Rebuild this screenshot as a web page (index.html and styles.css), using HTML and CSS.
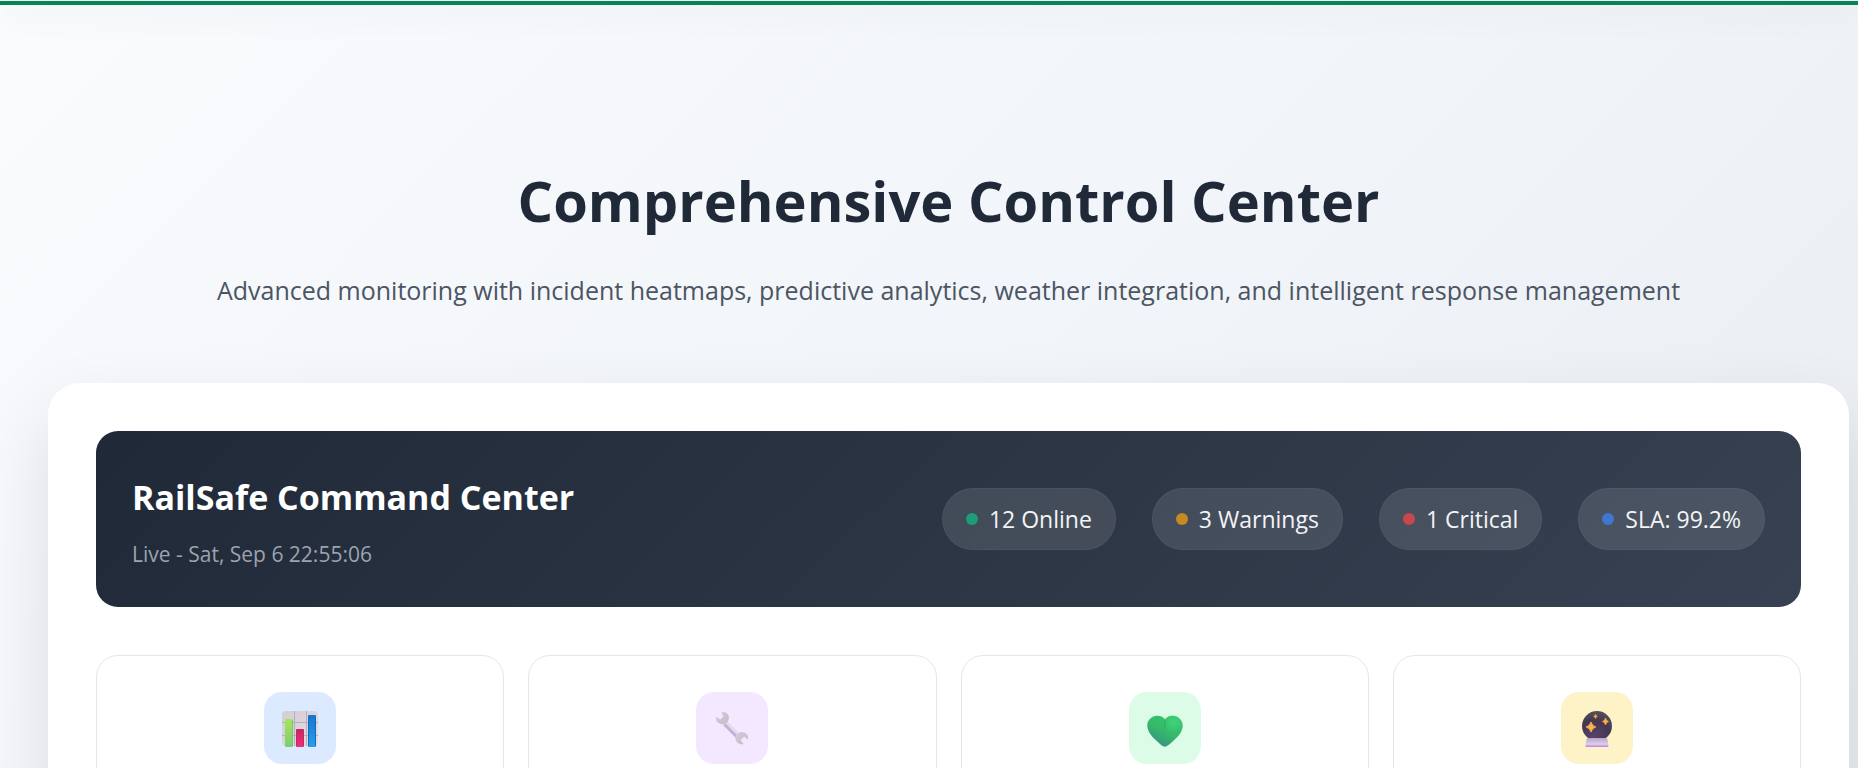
FILE: index.html
```
<!DOCTYPE html>
<html lang="en">
<head>
<meta charset="utf-8">
<meta name="viewport" content="width=device-width, initial-scale=1">
<title>RailSafe Control Center</title>
<link rel="stylesheet" href="styles.css">
</head>
<body>
<div class="page">
  <div class="topbar"></div>
  <main class="content">
    <header class="hero">
      <h1 class="hero-title">Comprehensive Control Center</h1>
      <p class="hero-text">Advanced monitoring with incident heatmaps, predictive analytics, weather integration, and intelligent response management</p>
    </header>
    <section class="panel">
      <div class="command">
        <div class="command-info">
          <h2 class="command-title">RailSafe Command Center</h2>
          <p class="command-time">Live - Sat, Sep 6 22:55:06</p>
        </div>
        <ul class="statuses">
          <li class="status"><span class="dot dot-green"></span><span>12 Online</span></li>
          <li class="status"><span class="dot dot-amber"></span><span>3 Warnings</span></li>
          <li class="status"><span class="dot dot-red"></span><span>1 Critical</span></li>
          <li class="status"><span class="dot dot-blue"></span><span>SLA: 99.2%</span></li>
        </ul>
      </div>
      <div class="cards">
        <article class="card">
          <div class="icon icon-blue">
            <svg width="36" height="36" viewBox="0 0 36 36" aria-hidden="true">
              <defs>
                <linearGradient id="wall" x1="0" y1="0" x2="1" y2="1"><stop offset="0" stop-color="#d3cdd6"/><stop offset="1" stop-color="#e5dce4"/></linearGradient>
                <linearGradient id="lime" x1="0" y1="0" x2="0" y2="1"><stop offset="0" stop-color="#a5e659"/><stop offset="1" stop-color="#79cf72"/></linearGradient>
                <linearGradient id="pink" x1="0" y1="0" x2="0" y2="1"><stop offset="0" stop-color="#c82562"/><stop offset="1" stop-color="#f02e78"/></linearGradient>
                <linearGradient id="blue" x1="0" y1="0" x2="0" y2="1"><stop offset="0" stop-color="#1676cf"/><stop offset="1" stop-color="#24a0ee"/></linearGradient>
              </defs>
              <rect x="0" y="0" width="36" height="35" rx="4" fill="url(#wall)"/>
              <path d="M12.500 0V35M24.500 0V35M0 11.500H36M0 24.500H36" stroke="#b5afbc" stroke-width="1"/>
              <rect x="3" y="8" width="8" height="28" rx="1" fill="url(#lime)"/>
              <path d="M10.500 9V35" stroke="#7cc465"/>
              <rect x="14" y="18" width="8" height="18" rx="1" fill="url(#pink)"/>
              <path d="M14.500 19V35M21.500 19V35" stroke="#c4286a"/>
              <rect x="26" y="4" width="8" height="32" rx="1" fill="url(#blue)"/>
              <path d="M26.500 5V35M33.500 5V35" stroke="#1a68b8"/>
            </svg>
          </div>
        </article>
        <article class="card">
          <div class="icon icon-purple">
            <svg width="36" height="36" viewBox="0 0 36 36" aria-hidden="true">
              <defs>
                <linearGradient id="steel" x1="0" y1="0" x2="1" y2="1"><stop offset="0" stop-color="#d9d5dd"/><stop offset=".3" stop-color="#cdc6d5"/><stop offset="1" stop-color="#c3bec8"/></linearGradient>
              </defs>
              <path d="M11 12.500 25 26.500" stroke="#bfb0d5" stroke-width="5"/>
              <path d="M12.500 11.500 26 25" stroke="#e2dbee" stroke-width="3"/>
              <path d="M7.500 1C10 .5 13 1.500 14.300 4c1 2 .9 4.500-.6 6.600-2 2.700-5.700 3.500-8.800 1.600C2.300 10.700 1.500 8 2.300 5.400l4 3 3.200-3z" fill="url(#steel)"/>
              <path d="M22.500 23.500c2-2.700 5.800-3.300 8.700-1.600 2.500 1.500 3.500 4.300 2.800 6.700l-3.800-2.800-3.700 2.900 3 4.300c-2.500 1-5.400 0-7-2.400-1.500-2.200-1.500-5 0-7.100z" fill="url(#steel)"/>
            </svg>
          </div>
        </article>
        <article class="card">
          <div class="icon icon-green">
            <svg width="36" height="36" viewBox="0 0 36 36" aria-hidden="true">
              <defs>
                <linearGradient id="heart" x1=".8" y1="0" x2=".2" y2="1"><stop offset="0" stop-color="#36c76c"/><stop offset=".5" stop-color="#36b96b"/><stop offset="1" stop-color="#368c83"/></linearGradient>
                <radialGradient id="shine" cx=".73" cy=".24" r=".3"><stop offset="0" stop-color="#48d984" stop-opacity=".7"/><stop offset="1" stop-color="#48d984" stop-opacity="0"/></radialGradient>
                <path id="heart-shape" d="M18 8.300C15.500 5 11.500 4.200 8 5 3.200 6.200 0 10.200.3 15c.4 5.800 4.300 10.300 8.700 14.200 3.500 3.200 6.500 6.500 9 6.500s5.700-3.400 9.200-6.600c4.400-3.900 8.200-8.400 8.500-14.100.2-4.800-3-8.800-7.700-10-3.500-.8-7.500 0-10 3.300z"/>
              </defs>
              <use href="#heart-shape" fill="url(#heart)"/>
              <use href="#heart-shape" fill="url(#shine)"/>
              <path d="M18 9v9" stroke="#209b51" stroke-width="1.500" opacity=".35"/>
            </svg>
          </div>
        </article>
        <article class="card">
          <div class="icon icon-yellow">
            <svg width="36" height="36" viewBox="0 0 36 36" aria-hidden="true">
              <defs>
                <radialGradient id="ball" cx=".4" cy=".85" r=".9"><stop offset="0" stop-color="#5a426c"/><stop offset=".6" stop-color="#44374f"/><stop offset="1" stop-color="#58525f"/></radialGradient>
                <linearGradient id="base" x1="0" y1="0" x2="0" y2="1"><stop offset="0" stop-color="#b9a5cb"/><stop offset=".7" stop-color="#decfe9"/><stop offset="1" stop-color="#c476e8"/></linearGradient>
              </defs>
              <circle cx="18" cy="15" r="15" fill="url(#ball)"/>
              <path d="M9 27h18q1.500 0 1.700 2l.8 6q0 1-1 1h-21q-1 0-1-1l.8-6q.2-2 1.700-2z" fill="url(#base)"/>
              <path d="M12 11q1 4.200 4.800 5-3.800.8-4.800 5-1-4.200-4.800-5 3.800-.8 4.800-5z" fill="#ffb44c" stroke="#ffb44c"/>
              <path d="M26.500 7q.7 3 3 3.500-2.300.5-3 3.500-.7-3-3-3.500 2.300-.5 3-3.500z" fill="#ffad47" stroke="#ffad47" stroke-width=".6"/>
              <path d="M16.500 3q.5 2 2 2.400-1.500.4-2 2.400-.5-2-2-2.400 1.500-.4 2-2.400z" fill="#f0a54b" stroke="#f0a54b" stroke-width=".4"/>
            </svg>
          </div>
        </article>
      </div>
    </section>
  </main>
</div>
</body>
</html>
```
FILE: styles.css
```
* {
  box-sizing: border-box;
  margin: 0;
  padding: 0;
}

body {
  font-family: "Segoe UI", "Open Sans", "Noto Sans", sans-serif;
  color: #1f2937;
}

.page {
  height: 100vh;
  overflow: hidden;
  background: linear-gradient(135deg, #f9fbfd 0%, #f2f5f9 50%, #e9edf2 100%);
}

.topbar {
  height: 5px;
  border-top: 1px solid #f1f5f4;
  background: #048457;
  box-shadow: 0 4px 36px rgba(0, 0, 0, 0.12);
}

.content {
  padding: 155px 9px 0 48px;
}

.hero {
  text-align: center;
}

.hero-title {
  font-size: 56px;
  font-weight: 700;
  line-height: 80px;
}

.hero-text {
  margin-top: 30px;
  font-size: 25px;
  line-height: 40px;
  color: #4b5563;
}

.panel {
  margin-top: 73px;
  padding: 48px;
  border-radius: 32px;
  background: #ffffff;
  box-shadow: 0 30px 72px rgba(0, 0, 0, 0.11);
}

.command {
  display: flex;
  align-items: center;
  justify-content: space-between;
  gap: 36px;
  padding: 36px;
  border-radius: 22px;
  background: linear-gradient(135deg, #1f2937, #374151);
}

.command-title {
  font-size: 34px;
  line-height: 60px;
  color: #ffffff;
}

.command-time {
  margin-top: 10px;
  font-size: 21px;
  line-height: 34px;
  color: #9ca3af;
}

.statuses {
  display: flex;
  gap: 36px;
  list-style: none;
}

.status {
  display: flex;
  align-items: center;
  gap: 11px;
  padding: 11px 23px;
  border: 1px solid rgba(255, 255, 255, 0.04);
  border-radius: 31px;
  background: rgba(255, 255, 255, 0.11);
  font-size: 23px;
  line-height: 38px;
  color: #f3f4f6;
}

.dot {
  width: 12px;
  height: 12px;
  border-radius: 50%;
}

.dot-green {
  background: #1d9d76;
}

.dot-amber {
  background: #c68a20;
}

.dot-red {
  background: #c6474c;
}

.dot-blue {
  background: #4076cf;
}

.cards {
  display: grid;
  grid-template-columns: repeat(4, 1fr);
  gap: 24px;
  margin-top: 48px;
}

.card {
  display: flex;
  justify-content: center;
  padding: 36px 36px 96px;
  border: 1px solid #e5e7eb;
  border-radius: 22px;
}

.icon {
  display: flex;
  align-items: center;
  justify-content: center;
  width: 72px;
  height: 72px;
  padding-top: 2px;
  border-radius: 18px;
}

.icon-blue {
  background: #dbeafe;
}

.icon-purple {
  background: #f3e8ff;
}

.icon-green {
  background: #dcfce7;
}

.icon-yellow {
  background: #fef3c7;
}
```
